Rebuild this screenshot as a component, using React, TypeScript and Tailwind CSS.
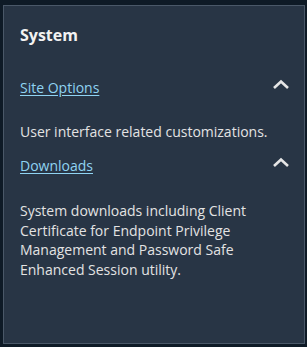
export default function App() {
  return (
    <div className="h-[347px] w-[307px] bg-[#0e1a26] pl-[3px] pr-[2px] pt-[5px] pb-[3px] font-['Open_Sans',sans-serif]">
      <section className="h-full border border-[#4a5868] bg-[#283545] pl-[16px] pr-[14px] pt-[19px]">
        <h2 className="text-[16px] font-bold leading-[20px] text-[#f2f2f2]">System</h2>

        <div className="mt-[33px] flex items-start justify-between">
          <a href="#" className="text-[14px] leading-[20px] text-[#8fd3f2] underline underline-offset-2">
            Site Options
          </a>
          <ChevronUp />
        </div>
        <p className="mt-[24px] text-[14px] leading-[20px] text-[#e3e3e3]">
          User interface related customizations.
        </p>

        <div className="mt-[14px] flex items-start justify-between">
          <a href="#" className="text-[14px] leading-[20px] text-[#8fd3f2] underline underline-offset-2">
            Downloads
          </a>
          <ChevronUp />
        </div>
        <p className="mt-[25px] text-[14px] leading-[19.5px] text-[#e3e3e3]">
          System downloads including Client Certificate for Endpoint Privilege Management and Password Safe Enhanced
          Session utility.
        </p>
      </section>
    </div>
  );
}

function ChevronUp() {
  return (
    <svg width="18" height="11" viewBox="0 0 18 11" className="mt-[1px]">
      <path d="M2 9 L9 2.5 L16 9" fill="none" stroke="#e6e6e6" strokeWidth="2.6" />
    </svg>
  );
}
